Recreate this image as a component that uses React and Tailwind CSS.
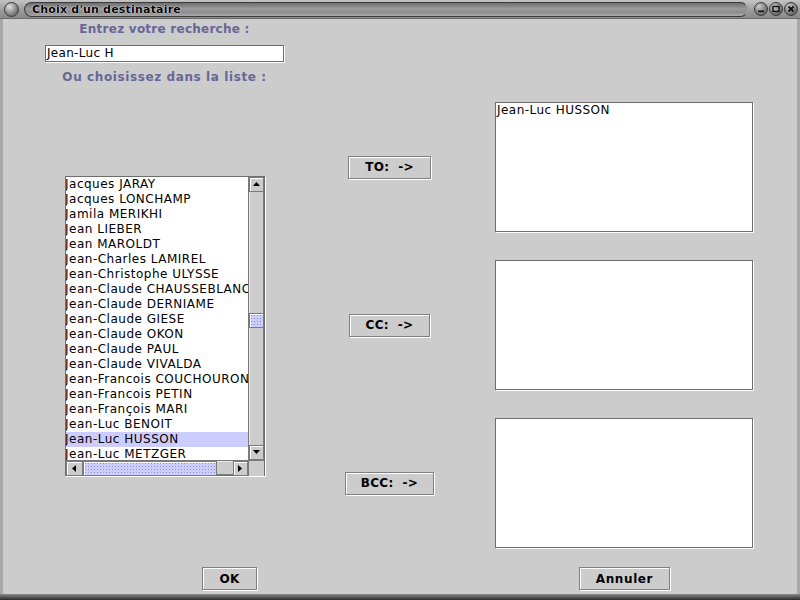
import React from "react";

const names = [
  "Jacques JARAY",
  "Jacques LONCHAMP",
  "Jamila MERIKHI",
  "Jean LIEBER",
  "Jean MAROLDT",
  "Jean-Charles LAMIREL",
  "Jean-Christophe ULYSSE",
  "Jean-Claude CHAUSSEBLANCHE",
  "Jean-Claude DERNIAME",
  "Jean-Claude GIESE",
  "Jean-Claude OKON",
  "Jean-Claude PAUL",
  "Jean-Claude VIVALDA",
  "Jean-Francois COUCHOURON",
  "Jean-Francois PETIN",
  "Jean-François MARI",
  "Jean-Luc BENOIT",
  "Jean-Luc HUSSON",
  "Jean-Luc METZGER",
];

const font = "font-['DejaVu_Sans',sans-serif]";

function Tri({ dir }) {
  const pts = {
    up: "1,6 8,6 4.5,2",
    down: "1,2 8,2 4.5,6",
    left: "6,1 6,8 2,4.5",
    right: "2,1 2,8 6,4.5",
  }[dir];
  return (
    <svg width="9" height="9" viewBox="0 0 9 9">
      <polygon points={pts} fill="#000" />
    </svg>
  );
}

function ArrowBtn({ dir, className = "" }) {
  return (
    <div
      className={`flex items-center justify-center bg-[#cccccc] border border-[#7a7a7a] shadow-[inset_1px_1px_0_#ffffff] ${className}`}
    >
      <Tri dir={dir} />
    </div>
  );
}

function Button({ children, className = "" }) {
  return (
    <div
      className={`flex items-center justify-center h-[23px] bg-[#cccccc] border border-[#808080] shadow-[inset_1px_1px_0_#ffffff,1px_1px_0_#ffffff] text-[12px] font-bold text-black tracking-[0.3px] ${font} ${className}`}
    >
      {children}
    </div>
  );
}

function TextBox({ children }) {
  return (
    <div
      className={`w-[258px] h-[130px] bg-white border border-[#6e6e6e] shadow-[1px_1px_0_#ffffff] px-[1px] text-[12px] leading-[15px] tracking-[0.45px] text-black ${font}`}
    >
      {children}
    </div>
  );
}

const thumbPattern =
  "bg-[#ccccff] bg-[radial-gradient(#8f8fc8_0.8px,transparent_1px)] bg-[length:3px_3px]";

export default function App() {
  return (
    <div className={`w-[800px] h-[600px] flex flex-col bg-[#cccccc] overflow-hidden ${font}`}>
      {/* Title bar */}
      <div className="h-[19px] flex items-center bg-[linear-gradient(#c4c4c4,#9a9a9a_60%,#8a8a8a)] border-b border-[#6a6a6a]">
        <div className="ml-[4px] w-[15px] h-[15px] rounded-full border border-[#3a3a3a] bg-[radial-gradient(circle_at_35%_30%,#e0e0e0,#8a8a8a_55%,#4a4a4a)]" />
        <div className="ml-[5px] flex-1 h-[15px] rounded-full border border-[#3c3c3c] border-r-[#9a9a9a] bg-[linear-gradient(#6e6e6e,#9c9c9c_45%,#8c8c8c_70%,#a8a8a8)] flex items-center pl-[7px]">
          <span className="text-[11px] font-bold text-black leading-none tracking-[0.2px] [text-shadow:0_0_1px_#ffffff,0_0_1px_#ffffff]">
            Choix d'un destinataire
          </span>
        </div>
        <div className="ml-[6px] mr-[2px] flex gap-[1px]">
          {["min", "max", "close"].map((k) => (
            <div
              key={k}
              className="w-[14px] h-[14px] rounded-full border border-[#3a3a3a] bg-[radial-gradient(circle_at_35%_30%,#c8c8c8,#7a7a7a_60%,#4a4a4a)] flex items-center justify-center"
            >
              <svg width="8" height="8" viewBox="0 0 8 8">
                {k === "min" && <rect x="1" y="5.5" width="6" height="1.6" fill="#111" />}
                {k === "max" && (
                  <rect x="1" y="1.5" width="6" height="5" fill="none" stroke="#111" strokeWidth="1.4" />
                )}
                {k === "close" && (
                  <path d="M1.5 1.5 L6.5 6.5 M6.5 1.5 L1.5 6.5" stroke="#111" strokeWidth="1.8" />
                )}
              </svg>
            </div>
          ))}
        </div>
      </div>

      {/* Body */}
      <div className="flex-1 flex flex-col border-l-[3px] border-r-[3px] border-l-[#a8a8a8] border-r-[#a8a8a8]">
        <div className="flex">
          {/* Left column */}
          <div className="ml-[42px] w-[239px] flex flex-col items-center">
            <div className="mt-[3px] h-[15px] leading-[15px] text-[12px] font-bold tracking-[0.25px] text-[#666699]">
              Entrez votre recherche :
            </div>
            <div className="mt-[8px] w-[239px] h-[17px] bg-white border border-[#6e6e6e] shadow-[1px_1px_0_#ffffff] pl-[1px] text-[12px] leading-[15px] tracking-[0.3px] text-black">
              Jean-Luc H
            </div>
            <div className="mt-[8px] h-[15px] leading-[15px] text-[12px] font-bold tracking-[0.6px] text-[#666699]">
              Ou choisissez dans la liste :
            </div>
            {/* List */}
            <div className="mt-[91px] ml-[1px] w-[200px] h-[300px] border border-[#6e6e6e] shadow-[1px_1px_0_#ffffff] flex flex-col">
              <div className="flex h-[283px]">
                <div className="w-[182px] h-[283px] overflow-hidden bg-white">
                  {names.map((n) => (
                    <div
                      key={n}
                      className={`h-[15px] leading-[15px] text-[12px] tracking-[0.5px] text-black whitespace-nowrap -ml-[1px] ${
                        n === "Jean-Luc HUSSON" ? "bg-[#ccccff]" : ""
                      }`}
                    >
                      {n}
                    </div>
                  ))}
                </div>
                {/* Vertical scrollbar */}
                <div className="w-[16px] h-[283px] flex flex-col bg-[#cccccc] border-l border-[#7a7a7a]">
                  <ArrowBtn dir="up" className="h-[15px] w-[15px]" />
                  <div className="h-[121px] border-r border-[#7a7a7a] shadow-[inset_1px_0_0_#e8e8e8]" />
                  <div className={`h-[15px] w-[15px] border border-[#7a7a7a] shadow-[inset_1px_1px_0_#ffffff] ${thumbPattern}`} />
                  <div className="flex-1 border-r border-[#7a7a7a] shadow-[inset_1px_0_0_#e8e8e8]" />
                  <ArrowBtn dir="down" className="h-[15px] w-[15px]" />
                </div>
              </div>
              {/* Horizontal scrollbar */}
              <div className="flex h-[15px] border-t border-[#7a7a7a]">
                <ArrowBtn dir="left" className="w-[17px] h-[15px]" />
                <div className={`w-[134px] h-[15px] border border-[#7a7a7a] shadow-[inset_1px_1px_0_#ffffff] ${thumbPattern}`} />
                <div className="flex-1 border-b border-[#7a7a7a] shadow-[inset_0_1px_0_#e8e8e8]" />
                <ArrowBtn dir="right" className="w-[15px] h-[15px]" />
                <div className="w-[16px] h-[15px] bg-[#cccccc] border-l border-[#7a7a7a]" />
              </div>
            </div>
          </div>

          {/* Right part: buttons + boxes */}
          <div className="flex flex-col mt-[83px] gap-[28px]">
            {[
              { label: "TO:  ->", w: "w-[83px]", content: "Jean-Luc HUSSON" },
              { label: "CC:  ->", w: "w-[81px]", content: "" },
              { label: "BCC:  ->", w: "w-[89px]", content: "" },
            ].map((r) => (
              <div key={r.label} className="flex items-center">
                <div className="w-[211px] flex justify-center">
                  <Button className={`${r.w} whitespace-pre`}>{r.label}</Button>
                </div>
                <TextBox>{r.content}</TextBox>
              </div>
            ))}
          </div>
        </div>

        {/* Bottom buttons */}
        <div className="flex mt-[19px]">
          <Button className="ml-[199px] w-[55px]">OK</Button>
          <Button className="ml-[322px] w-[91px] tracking-[0.6px]">Annuler</Button>
        </div>
      </div>

      {/* Bottom frame */}
      <div className="h-[6px] bg-[linear-gradient(#8a8a8a,#2a2a2a)]" />
    </div>
  );
}
